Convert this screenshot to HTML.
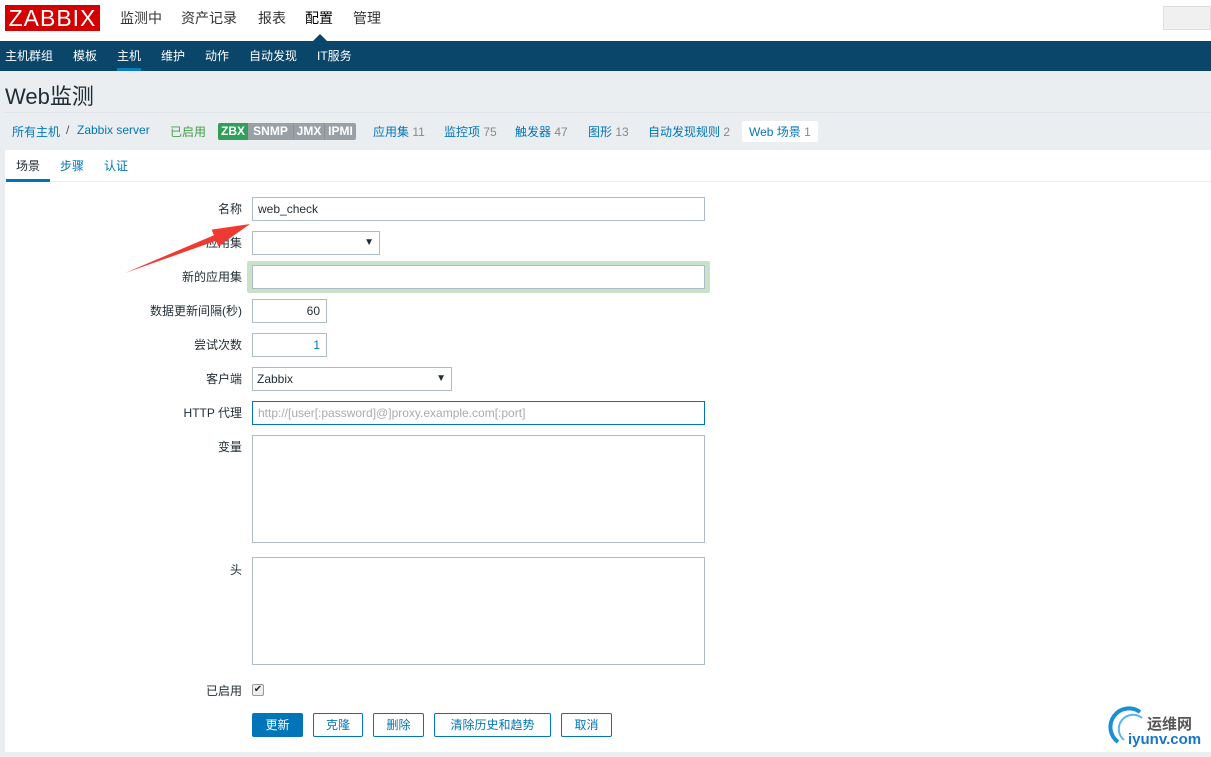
<!DOCTYPE html>
<html><head><meta charset="utf-8"><style>
*{margin:0;padding:0;box-sizing:border-box}
body{width:1211px;height:757px;overflow:hidden;background:#ebeef1;font-family:"Liberation Sans","Noto Sans CJK SC",sans-serif;font-size:12px;color:#1f2c33;position:relative}
.a{position:absolute;white-space:nowrap}
.top{position:absolute;left:0;top:0;width:1211px;height:41px;background:#fff}
.nav{position:absolute;left:0;top:41px;width:1211px;height:30px;background:#0a466a}
.nav span{position:absolute;top:6px;color:#fff;font-size:12px}
.menu{font-size:14px;color:#333;top:8px}
.lnk{color:#0275b8}
.inp{position:absolute;background:#fff;border:1px solid #acbbc4;height:24px}
.lab{position:absolute;right:969px;text-align:right;font-size:12px;color:#1f2c33}
.btn{position:absolute;top:713px;height:24px;border:1px solid #0275b8;border-radius:2px;color:#0275b8;background:#fff;text-align:center;line-height:22px;font-size:12px}
.bd{position:absolute;top:0;height:17px;text-align:center;background:#9aa1a6}
</style></head><body>
<div class="top"></div>
<div class="a" style="left:5px;top:5px;width:95px;height:26px;background:#d40000;color:#fff;font-size:23px;line-height:26px;text-align:center;letter-spacing:1px">ZABBIX</div>
<span class="a menu" style="left:120px">监测中</span>
<span class="a menu" style="left:181px">资产记录</span>
<span class="a menu" style="left:258px">报表</span>
<span class="a menu" style="left:305px;color:#000">配置</span>
<span class="a menu" style="left:353px">管理</span>
<div class="a" style="left:1163px;top:6px;width:48px;height:24px;background:#f0f0f0;border:1px solid #ddd"></div>
<div class="nav">
<span style="left:5px">主机群组</span><span style="left:73px">模板</span><span style="left:117px">主机</span><span style="left:161px">维护</span><span style="left:205px">动作</span><span style="left:249px">自动发现</span><span style="left:317px">IT服务</span>
<div class="a" style="left:117px;top:27px;width:24px;height:3px;background:#0a7dc6"></div>
</div>
<div class="a" style="left:313px;top:34px;width:0;height:0;border-left:7px solid transparent;border-right:7px solid transparent;border-bottom:7px solid #0a466a"></div>
<div class="a" style="left:5px;top:79px;font-size:22px;color:#1f2c33">Web监测</div>
<div class="a" style="left:5px;top:112px;width:1206px;height:1px;background:#dde3e8"></div>
<span class="a lnk" style="left:12px;top:123px">所有主机</span>
<span class="a" style="left:66px;top:123px;color:#555">/</span>
<span class="a lnk" style="left:77px;top:123px">Zabbix server</span>
<span class="a" style="left:170px;top:123px;color:#429e47">已启用</span>
<div class="a" style="left:218px;top:123px;width:138px;height:17px;border-radius:2px;overflow:hidden;font-size:12px;font-weight:bold;color:#fff;line-height:17px">
<span class="bd" style="left:0;width:30px;background:#2f9f5a">ZBX</span><span class="bd" style="left:30px;width:45px">SNMP</span><span class="bd" style="left:75px;width:31px;border-left:1px solid #8a9197">JMX</span><span class="bd" style="left:106px;width:32px;border-left:1px solid #8a9197">IPMI</span></div>
<span class="a" style="left:373px;top:123px"><span class="lnk">应用集</span> <span style="color:#888">11</span></span>
<span class="a" style="left:444px;top:123px"><span class="lnk">监控项</span> <span style="color:#888">75</span></span>
<span class="a" style="left:515px;top:123px"><span class="lnk">触发器</span> <span style="color:#888">47</span></span>
<span class="a" style="left:588px;top:123px"><span class="lnk">图形</span> <span style="color:#888">13</span></span>
<span class="a" style="left:648px;top:123px"><span class="lnk">自动发现规则</span> <span style="color:#888">2</span></span>
<div class="a" style="left:742px;top:121px;width:76px;height:21px;background:#fff;border-radius:2px;padding:2px 7px;color:#0275b8">Web 场景 <span style="color:#888">1</span></div>
<div class="a" style="left:5px;top:150px;width:1206px;height:602px;background:#fff"></div>
<span class="a" style="left:16px;top:157px;color:#1f2c33">场景</span>
<span class="a lnk" style="left:60px;top:157px">步骤</span>
<span class="a lnk" style="left:104px;top:157px">认证</span>
<div class="a" style="left:5px;top:181px;width:1206px;height:1px;background:#ebeef1"></div>
<div class="a" style="left:6px;top:179px;width:44px;height:3px;background:#0275b8"></div>

<span class="lab" style="top:200px">名称</span>
<div class="inp" style="left:252px;top:197px;width:453px;padding:4px 5px">web_check</div>
<span class="lab" style="top:234px">应用集</span>
<div class="inp" style="left:252px;top:231px;width:128px"><span class="a" style="right:5px;top:5px;font-size:10px">▼</span></div>
<span class="lab" style="top:268px">新的应用集</span>
<div class="a" style="left:247px;top:261px;width:463px;height:32px;background:#c8e3c9;border-radius:2px"></div>
<div class="inp" style="left:252px;top:265px;width:453px"></div>
<span class="lab" style="top:302px">数据更新间隔(秒)</span>
<div class="inp" style="left:252px;top:299px;width:75px;text-align:right;padding:4px 6px">60</div>
<span class="lab" style="top:336px">尝试次数</span>
<div class="inp" style="left:252px;top:333px;width:75px;text-align:right;padding:4px 6px;color:#0275b8">1</div>
<span class="lab" style="top:370px">客户端</span>
<div class="inp" style="left:252px;top:367px;width:200px;padding:4px 4px">Zabbix<span class="a" style="right:5px;top:5px;font-size:10px">▼</span></div>
<span class="lab" style="top:404px">HTTP 代理</span>
<div class="inp" style="left:252px;top:401px;width:453px;border-color:#0275b8;padding:4px 5px;color:#aaa">http://[user[:password]@]proxy.example.com[:port]</div>
<span class="lab" style="top:438px">变量</span>
<div class="inp" style="left:252px;top:435px;width:453px;height:108px"></div>
<span class="lab" style="top:561px">头</span>
<div class="inp" style="left:252px;top:557px;width:453px;height:108px"></div>
<span class="lab" style="top:682px">已启用</span>
<div class="a" style="left:252px;top:684px;width:12px;height:12px;border:1px solid #999;background:#eee;border-radius:2px;font-size:10px;line-height:10px;text-align:center">✔</div>
<div class="btn" style="left:252px;width:51px;background:#0275b8;color:#fff">更新</div>
<div class="btn" style="left:313px;width:50px">克隆</div>
<div class="btn" style="left:373px;width:51px">删除</div>
<div class="btn" style="left:434px;width:117px">清除历史和趋势</div>
<div class="btn" style="left:561px;width:51px">取消</div>

<svg class="a" style="left:0;top:0" width="1211" height="757">
<polygon points="125,273 213.9,235.2 211.7,229.6 250,224 218.3,246.4 216.1,240.8" fill="#ee3a33"/>
<path d="M1118,742 A18,18 0 0 1 1140,712" stroke="#1a8fd6" stroke-width="4" fill="none"/>
<path d="M1124,740 A12,12 0 0 1 1142,718" stroke="#5ab4ea" stroke-width="2" fill="none"/>
</svg>
<span class="a" style="left:1147px;top:713px;font-size:15px;color:#555;font-weight:bold">运维网</span>
<span class="a" style="left:1128px;top:731px;font-size:15px;color:#1677c8;font-weight:bold">iyunv.com</span>
</body></html>
